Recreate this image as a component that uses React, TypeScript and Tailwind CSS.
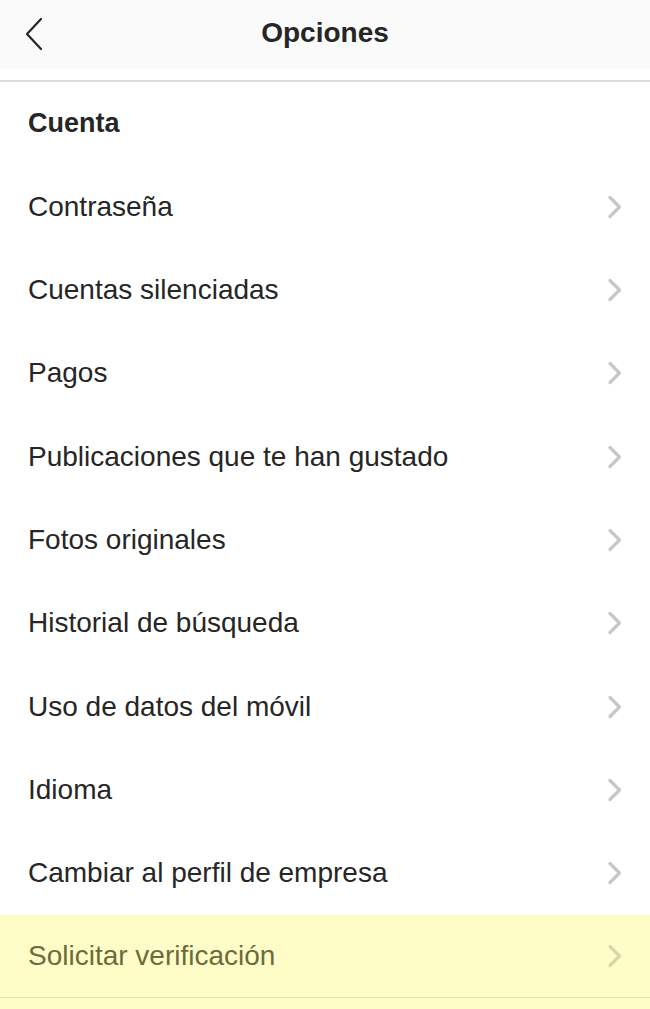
import React from "react";

const items = [
  "Contraseña",
  "Cuentas silenciadas",
  "Pagos",
  "Publicaciones que te han gustado",
  "Fotos originales",
  "Historial de búsqueda",
  "Uso de datos del móvil",
  "Idioma",
  "Cambiar al perfil de empresa",
];

function BackIcon() {
  return (
    <svg width="20" height="34" viewBox="0 0 20 34" fill="none">
      <path d="M17 2 L3 17 L17 32" stroke="#262626" strokeWidth="2.2" strokeLinecap="round" strokeLinejoin="round" />
    </svg>
  );
}

function Chevron({ color }: { color: string }) {
  return (
    <svg width="16" height="24" viewBox="0 0 16 24" fill="none">
      <path d="M3 2.5 L12.5 12 L3 21.5" stroke={color} strokeWidth="3.2" strokeLinecap="round" strokeLinejoin="round" />
    </svg>
  );
}

function Row({ label }: { label: string }) {
  return (
    <div className="flex h-[83.333px] items-center justify-between pl-[28px] pr-[27px]">
      <span className="text-[28px] text-[#262626]">{label}</span>
      <Chevron color="#c7c7c7" />
    </div>
  );
}

export default function App() {
  return (
    <div
      className="flex h-[1009px] w-[650px] flex-col overflow-hidden bg-white"
      style={{ fontFamily: '"Liberation Sans", Arial, sans-serif' }}
    >
      <div className="border-b-2 border-[#dbdbdb] bg-white pb-[11px]">
        <div className="grid h-[69px] grid-cols-[80px_1fr_80px] items-center bg-[#fafafa]">
          <div className="flex items-center pl-[24px] pb-[2px]">
            <BackIcon />
          </div>
          <h1 className="pb-[4px] text-center text-[28px] font-bold text-[#262626]">Opciones</h1>
          <div />
        </div>
      </div>

      <div className="flex h-[83px] items-center pl-[28px]">
        <span className="text-[27px] font-bold text-[#262626]">Cuenta</span>
      </div>

      {items.map((label) => (
        <Row key={label} label={label} />
      ))}

      <div className="flex flex-1 flex-col bg-[#fffdc7]">
        <div className="flex h-[83.333px] items-center justify-between border-b border-[#e2e0b4] pl-[28px] pr-[27px]">
          <span className="text-[28px] text-[#6d6b3c]">Solicitar verificación</span>
          <Chevron color="#d9d7a9" />
        </div>
      </div>
    </div>
  );
}
